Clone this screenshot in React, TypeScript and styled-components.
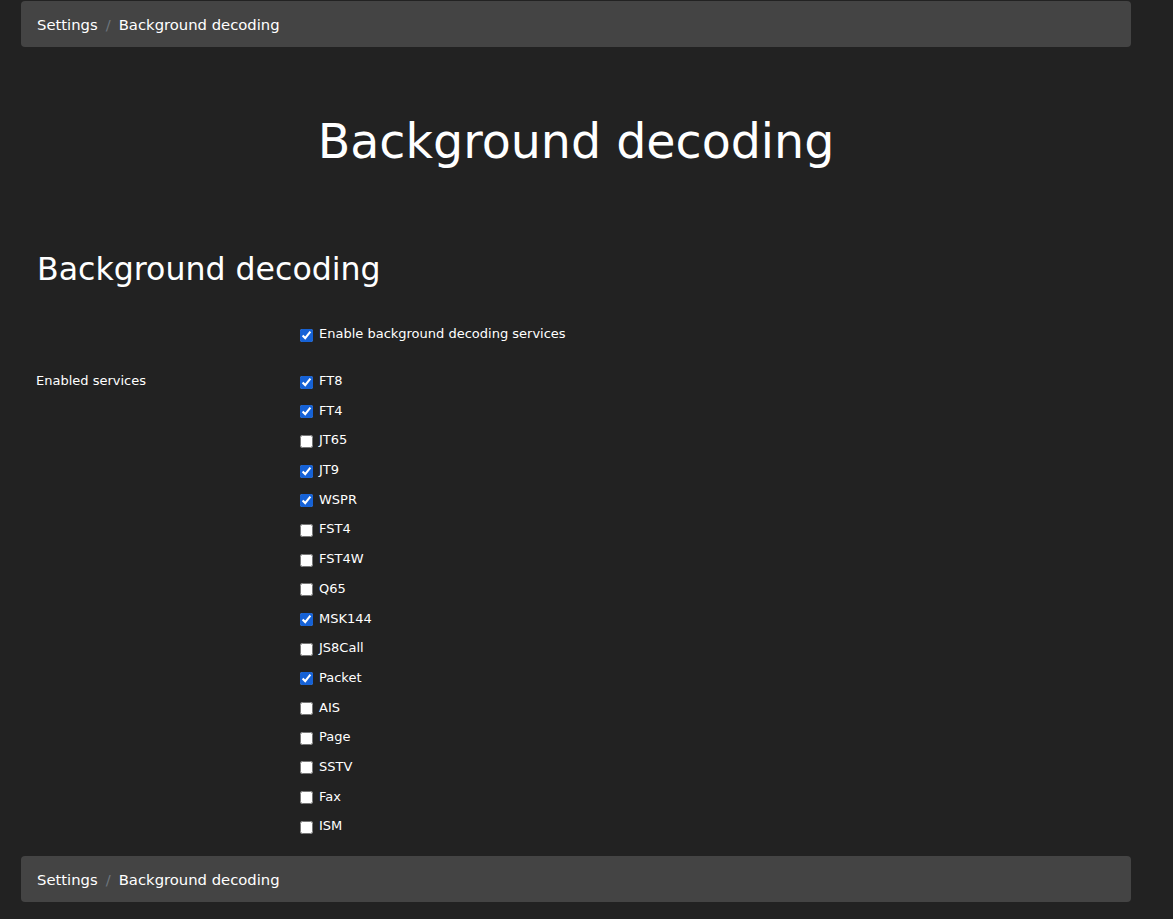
import React from "react";
import styled, { createGlobalStyle } from "styled-components";

const Global = createGlobalStyle`
  html, body { margin: 0; padding: 0; background: #222222; }
  body { font-family: "DejaVu Sans", Verdana, sans-serif; color: #ffffff; }
`;

const Page = styled.div`
  width: 1110px;
  margin-left: 21px;
  padding-top: 1px;
`;

const Breadcrumb = styled.nav`
  display: flex;
  align-items: center;
  height: 46px;
  padding: 0 16px;
  background: #444444;
  border-radius: 4px;
  font-size: 14.8px;
  color: #ffffff;
`;

const Crumb = styled.span``;

const Sep = styled.span`
  color: #6c757d;
  padding: 0 8px;
`;

const Title = styled.h1`
  margin: 64px 0 0;
  text-align: center;
  font-size: 47.5px;
  font-weight: 400;
  line-height: 62px;
`;

const Section = styled.h2`
  margin: 75px 0 0 16px;
  font-size: 31.6px;
  font-weight: 400;
  line-height: 42px;
`;

const FormRow = styled.div<{ $top: number }>`
  display: grid;
  grid-template-columns: 279px 1fr;
  margin-top: ${(p) => p.$top}px;
  font-size: 13px;
`;

const Label = styled.div`
  padding-left: 15px;
  line-height: 18px;
`;

const CheckList = styled.div`
  display: flex;
  flex-direction: column;
  gap: 11.7px;
`;

const Check = styled.label`
  display: flex;
  align-items: center;
  height: 18px;
  line-height: 18px;
`;

const Box = styled.input`
  width: 13px;
  height: 13px;
  margin: 2px 6px 0 0;
  accent-color: #1662d6;
`;

const services: [string, boolean][] = [
  ["FT8", true],
  ["FT4", true],
  ["JT65", false],
  ["JT9", true],
  ["WSPR", true],
  ["FST4", false],
  ["FST4W", false],
  ["Q65", false],
  ["MSK144", true],
  ["JS8Call", false],
  ["Packet", true],
  ["AIS", false],
  ["Page", false],
  ["SSTV", false],
  ["Fax", false],
  ["ISM", false],
];

const Crumbs = () => (
  <Breadcrumb>
    <Crumb>Settings</Crumb>
    <Sep>/</Sep>
    <Crumb>Background decoding</Crumb>
  </Breadcrumb>
);

const Footer = styled.div`
  margin-top: 21px;
`;

export default function App() {
  return (
    <>
      <Global />
      <Page>
        <Crumbs />
        <Title>Background decoding</Title>
        <Section>Background decoding</Section>
        <FormRow $top={35}>
          <Label />
          <CheckList>
            <Check>
              <Box type="checkbox" defaultChecked />
              Enable background decoding services
            </Check>
          </CheckList>
        </FormRow>
        <FormRow $top={29}>
          <Label>Enabled services</Label>
          <CheckList>
            {services.map(([name, on]) => (
              <Check key={name}>
                <Box type="checkbox" defaultChecked={on} />
                {name}
              </Check>
            ))}
          </CheckList>
        </FormRow>
        <Footer>
          <Crumbs />
        </Footer>
      </Page>
    </>
  );
}
